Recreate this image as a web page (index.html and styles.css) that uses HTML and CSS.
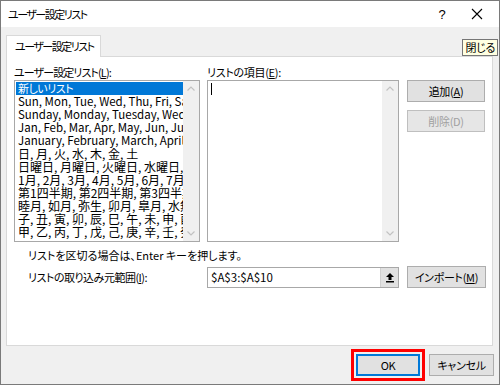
FILE: index.html
```html
<!DOCTYPE html>
<html lang="ja">
<head>
<meta charset="utf-8">
<link rel="stylesheet" href="styles.css">
</head>
<body>
<div class="window">
  <div class="titlebar">
    <span class="title">ユーザー設定リスト</span>
    <span class="tb-help">?</span>
    <span class="tb-close"><svg width="12" height="12" viewBox="0 0 12 12"><path d="M1 1L11 11M11 1L1 11" stroke="#000" stroke-width="1.1" fill="none"/></svg></span>
  </div>
  <div class="tabs">
    <div class="tab">ユーザー設定リスト</div>
    <div class="tooltip">閉じる</div>
  </div>
  <div class="panel">
    <div class="top">
      <div class="col-left">
        <div class="label">ユーザー設定リスト(<u>L</u>):</div>
        <div class="listbox">
          <div class="items">
            <div class="item sel">新しいリスト</div>
            <div class="item lat">Sun, Mon, Tue, Wed, Thu, Fri, Sat</div>
            <div class="item lat">Sunday, Monday, Tuesday, Wednesday</div>
            <div class="item lat">Jan, Feb, Mar, Apr, May, Jun, Jul, Aug</div>
            <div class="item lat">January, February, March, April, May</div>
            <div class="item">日, 月, 火, 水, 木, 金, 土</div>
            <div class="item">日曜日, 月曜日, 火曜日, 水曜日, 木曜日</div>
            <div class="item">1月, 2月, 3月, 4月, 5月, 6月, 7月, 8月</div>
            <div class="item">第1四半期, 第2四半期, 第3四半期, 第4四半期</div>
            <div class="item">睦月, 如月, 弥生, 卯月, 皐月, 水無月</div>
            <div class="item">子, 丑, 寅, 卯, 辰, 巳, 午, 未, 申, 酉, 戌</div>
            <div class="item">甲, 乙, 丙, 丁, 戊, 己, 庚, 辛, 壬, 癸</div>
          </div>
          <div class="vscroll">
            <svg class="arr" width="16" height="16" viewBox="0 0 16 16"><path d="M4.5 9.5L8 6L11.5 9.5" stroke="#c2c2c2" stroke-width="1.2" fill="none"/></svg>
            <svg class="arr" width="16" height="16" viewBox="0 0 16 16"><path d="M4.5 6.5L8 10L11.5 6.5" stroke="#c2c2c2" stroke-width="1.2" fill="none"/></svg>
          </div>
        </div>
      </div>
      <div class="col-right">
        <div class="label">リストの項目(<u>E</u>):</div>
        <div class="listbox edit">
          <div class="items"><span class="caret"></span></div>
          <div class="vscroll">
            <svg class="arr" width="16" height="16" viewBox="0 0 16 16"><path d="M4.5 9.5L8 6L11.5 9.5" stroke="#c2c2c2" stroke-width="1.2" fill="none"/></svg>
            <svg class="arr" width="16" height="16" viewBox="0 0 16 16"><path d="M4.5 6.5L8 10L11.5 6.5" stroke="#c2c2c2" stroke-width="1.2" fill="none"/></svg>
          </div>
        </div>
      </div>
      <div class="col-buttons">
        <div class="btn">追加(<u>A</u>)</div>
        <div class="btn disabled">削除(D)</div>
      </div>
    </div>
    <div class="note">リストを区切る場合は、Enter キーを押します。</div>
    <div class="import-row">
      <div class="import-label">リストの取り込み元範囲(<u>I</u>):</div>
      <div class="range">
        <span class="range-text">$A$3:$A$10</span>
        <span class="range-btn"><svg width="10" height="11" viewBox="0 0 10 11"><path d="M5 1L1 5H3.5V8H6.5V5H9Z" fill="#000"/><rect x="1" y="9" width="8" height="1.5" fill="#000"/></svg></span>
      </div>
      <div class="btn import">インポート(<u>M</u>)</div>
    </div>
  </div>
  <div class="footer">
    <div class="btn ok">OK</div>
    <div class="btn cancel">キャンセル</div>
  </div>
</div>
</body>
</html>
```
FILE: styles.css
```css
* { box-sizing: border-box; }
html, body { margin: 0; padding: 0; }
body {
  width: 500px;
  height: 385px;
  overflow: hidden;
  font-family: "Noto Sans CJK JP", "Noto Sans", sans-serif;
  font-size: 11px;
  letter-spacing: -0.3px;
  font-feature-settings: "palt";
  color: #000;
}
u { text-decoration: underline; text-underline-offset: 1px; }
.window {
  width: 500px;
  height: 385px;
  border: 1px solid #7a7a7a;
  background: #f0f0f0;
  display: flex;
  flex-direction: column;
}
.titlebar {
  height: 26px;
  background: #fff;
  display: flex;
  align-items: center;
  flex-shrink: 0;
}
.title { padding-left: 7px; flex: 1; letter-spacing: -1.5px; }
.tb-help { width: 20px; text-align: center; font-size: 13px; margin-right: 19px; font-family: "Liberation Sans", sans-serif; letter-spacing: 0; }
.tb-close { width: 14px; margin-right: 14px; display: flex; align-items: center; }
.tabs {
  height: 29px;
  position: relative;
  padding-left: 5px;
  padding-top: 7px;
  display: flex;
  flex-shrink: 0;
}
.tab {
  width: 95px;
  height: 22px;
  background: #fff;
  border: 1px solid #d9d9d9;
  border-bottom: none;
  padding-left: 8px;
  line-height: 20px;
  white-space: nowrap;
  letter-spacing: -1.5px;
  position: relative;
  top: 1px;
  z-index: 1;
}
.tooltip {
  position: absolute;
  right: 1px;
  top: 12px;
  height: 17px;
  padding: 0 2px;
  background: #ffffe1;
  border: 1px solid #767676;
  font-size: 11px;
  line-height: 15px;
}
.panel {
  margin-left: 5px;
  width: 487px;
  height: 290px;
  background: #fff;
  border: 1px solid #d9d9d9;
  padding: 8px 0 0 7px;
  flex-shrink: 0;
}
.top { display: flex; }
.label { height: 15px; line-height: 14px; white-space: nowrap; }
.col-left .label { letter-spacing: -0.9px; }
.col-left { width: 186px; }
.col-right { width: 192px; margin-left: 7px; }
.col-buttons { width: 78px; margin-left: 8px; padding-top: 15px; display: flex; flex-direction: column; gap: 8px; }
.listbox {
  height: 162px;
  border: 1px solid #a8a8a8;
  display: flex;
  background: #fff;
}
.items {
  flex: 1;
  overflow: hidden;
  padding: 1px 0 0 1px;
  position: relative;
}
.item {
  height: 13px;
  line-height: 13px;
  white-space: nowrap;
  padding-left: 2px;
  font-size: 12px;
  letter-spacing: 0;
}
.item.lat { font-size: 11.5px; }
.item.sel { background: #0078d7; color: #fff; font-size: 11px; letter-spacing: -0.5px; }
.vscroll {
  width: 16px;
  background: #f0f0f0;
  display: flex;
  flex-direction: column;
  justify-content: space-between;
}
.arr { display: block; }
.caret {
  position: absolute;
  left: 3px;
  top: 2px;
  width: 1px;
  height: 12px;
  background: #000;
}
.btn {
  height: 22px;
  background: #e1e1e1;
  border: 1px solid #adadad;
  display: flex;
  align-items: center;
  justify-content: center;
  white-space: nowrap;
}
.btn.disabled { color: #a0a0a0; border-color: #bfbfbf; background: #e6e6e6; }
.note { padding-left: 14px; margin-top: 6px; height: 14px; line-height: 14px; white-space: nowrap; letter-spacing: 0; }
.import-row { display: flex; align-items: center; margin-top: 4px; height: 22px; }
.import-label { width: 193px; padding-left: 14px; white-space: nowrap; letter-spacing: -0.5px; }
.range {
  width: 192px;
  height: 21px;
  border: 1px solid #a8a8a8;
  display: flex;
  align-items: stretch;
}
.range-text { flex: 1; padding-left: 3px; line-height: 19px; font-size: 11.5px; letter-spacing: 0; }
.range-btn {
  width: 18px;
  background: #e1e1e1;
  border-left: 1px solid #d0d0d0;
  display: flex;
  align-items: center;
  justify-content: center;
}
.btn.import { width: 79px; margin-left: 8px; }
.footer {
  display: flex;
  justify-content: flex-end;
  gap: 9px;
  padding: 8px 5px 0 0;
}
.btn.ok {
  width: 64px;
  border: 1px solid #0078d7;
  box-shadow: inset 0 0 0 1px #0078d7;
  outline: 3px solid #ff0000;
  outline-offset: 2px;
}
.btn.cancel { width: 65px; }
```
